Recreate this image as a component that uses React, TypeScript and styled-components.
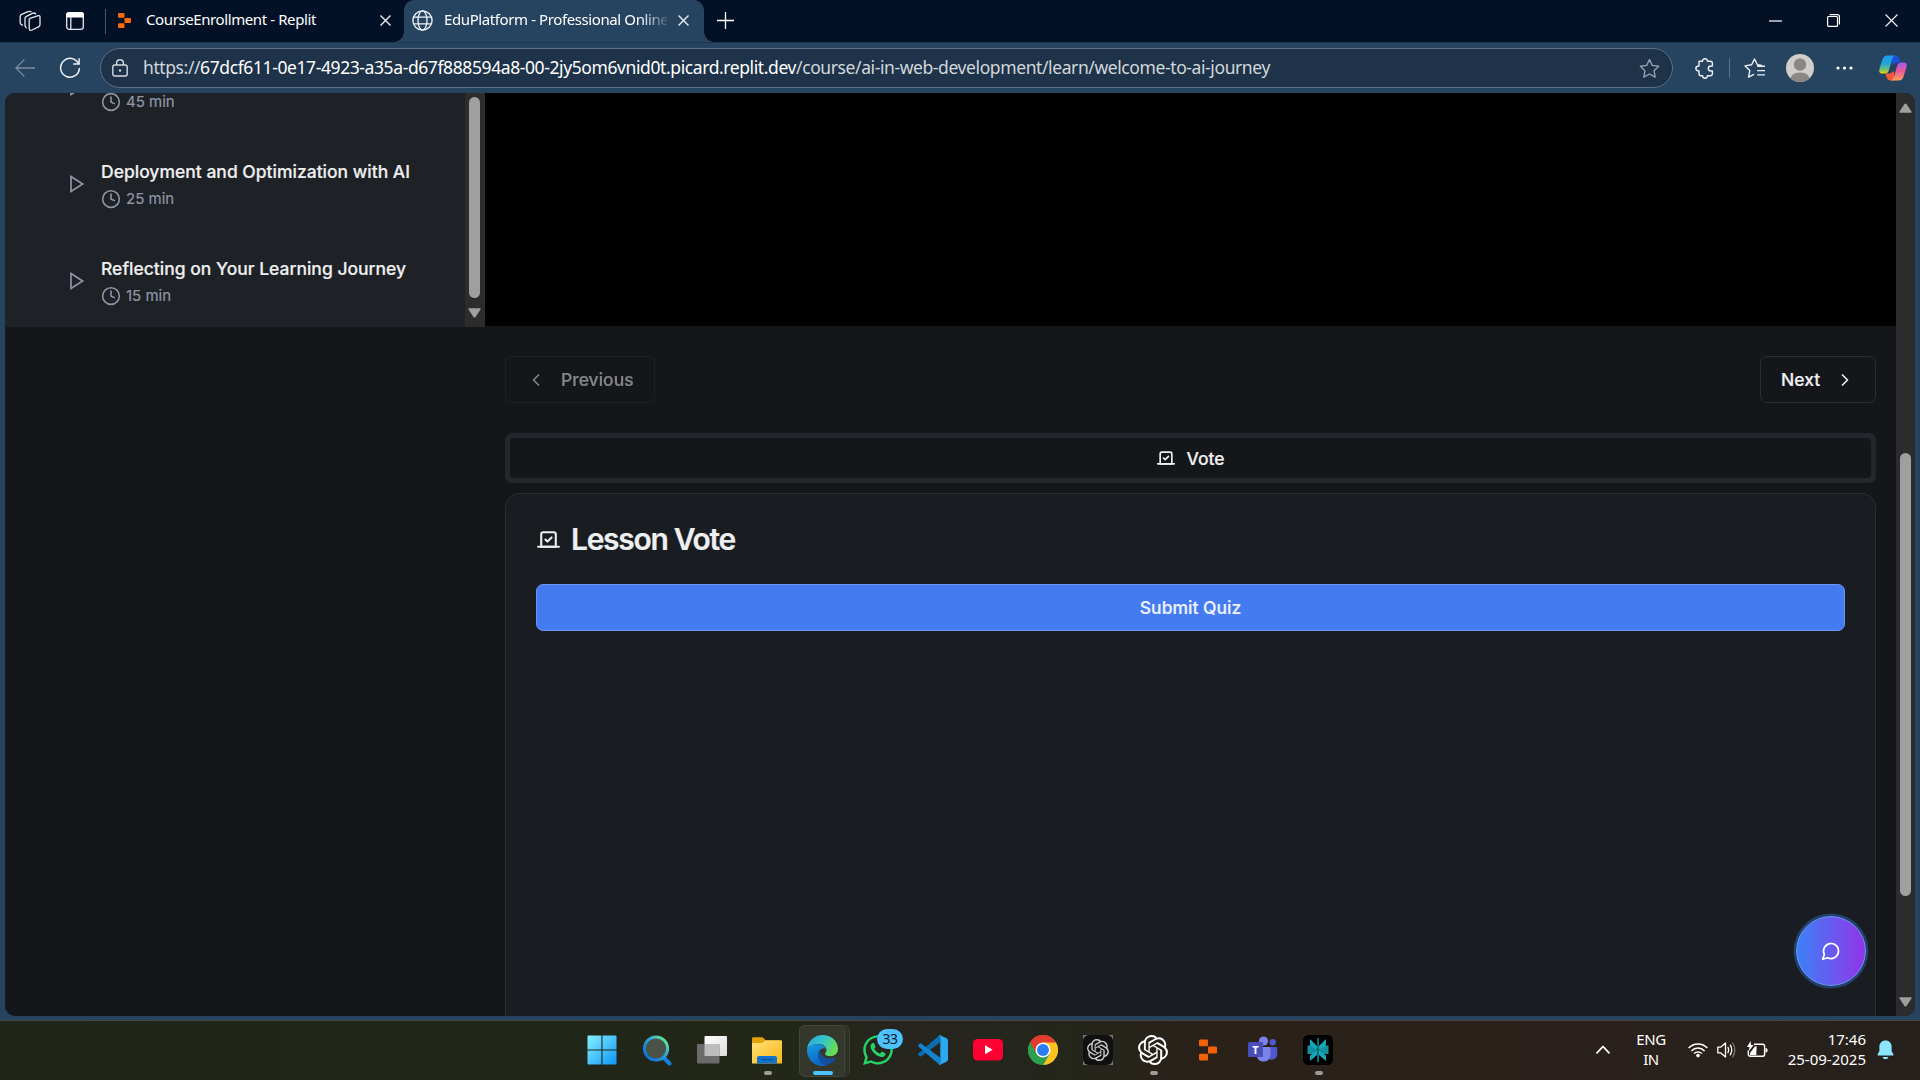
import React from 'react';
import styled, { createGlobalStyle, css } from 'styled-components';
import { ChevronLeft, ChevronRight, Clock, Vote } from 'lucide-react';
import { FaWhatsapp } from 'react-icons/fa';

const GlobalStyle = createGlobalStyle`
  * { box-sizing: border-box; }
  body { margin: 0; background: #15161a; overflow: hidden; }
  button { font: inherit; color: inherit; background: none; border: 0; padding: 0; margin: 0; }
  svg { display: block; flex: none; }
`;

const uiFont = css`font-family: "Noto Sans", "Open Sans", sans-serif;`;
const pageFont = css`font-family: Inter, "Liberation Sans", sans-serif;`;

const Desktop = styled.div`
  width: 1920px;
  height: 1080px;
  display: flex;
  flex-direction: column;
  overflow: hidden;
  background: #264360;
  color: #fff;
  ${uiFont}
`;

const Gap = styled.div<{ $w: number }>`
  width: ${p => p.$w}px;
  flex: none;
`;

/* ---------- browser chrome ---------- */

const TabStrip = styled.header`
  flex: none;
  height: 42px;
  display: flex;
  align-items: stretch;
  background: #031126;
`;

const StripCell = styled.div<{ $w: number }>`
  width: ${p => p.$w}px;
  height: 41px;
  flex: none;
  display: flex;
  align-items: center;
  justify-content: center;
`;

const StripDivider = styled.div`
  width: 1px;
  height: 25px;
  margin: 9px 0 0 14px;
  background: #4b586a;
`;

const BackgroundTab = styled.div`
  width: 298px;
  height: 40px;
  display: flex;
  align-items: center;
  padding-left: 10px;
`;

const ActiveTab = styled.div`
  position: relative;
  width: 300px;
  height: 42px;
  display: flex;
  align-items: center;
  padding: 0 0 2px 8px;
  border-radius: 10px 10px 0 0;
  background: #264360;
  &::before, &::after {
    content: "";
    position: absolute;
    bottom: 0;
    width: 10px;
    height: 10px;
  }
  &::before { left: -10px; background: radial-gradient(circle at 0 0, transparent 9.5px, #264360 10px); }
  &::after { right: -10px; background: radial-gradient(circle at 100% 0, transparent 9.5px, #264360 10px); }
`;

const TabTitle = styled.span<{ $w: number; $fade?: boolean }>`
  width: ${p => p.$w}px;
  flex: none;
  overflow: hidden;
  white-space: nowrap;
  font-size: 15px;
  line-height: 22px;
  padding-bottom: 2px;
  letter-spacing: -0.4px;
  ${p => p.$fade && css`
    mask-image: linear-gradient(90deg, #000 88%, rgba(0, 0, 0, 0.15) 100%);
  `}
`;

const Spacer = styled.div`flex: 1;`;

const Toolbar = styled.div`
  flex: none;
  height: 51px;
  display: flex;
  align-items: center;
  border-top: 1px solid #1c3653;
  background: #264360;
`;

const ToolCell = styled.div<{ $w: number; $shift?: number }>`
  width: ${p => p.$w}px;
  padding-left: ${p => p.$shift || 0}px;
  height: 40px;
  flex: none;
  display: flex;
  align-items: center;
  justify-content: center;
`;

const AddressBar = styled.div`
  width: 1573px;
  height: 40px;
  flex: none;
  display: flex;
  align-items: center;
  border: 1px solid #5c6e80;
  border-radius: 20px;
  background: #1e3349;
`;

const Url = styled.div`
  flex: 1;
  white-space: nowrap;
  font-size: 17.5px;
  line-height: 26px;
  padding-bottom: 2px;
  letter-spacing: -0.4px;
  color: #d2d7dc;
`;

const UrlHost = styled.span`color: #fff;`;

const ToolDivider = styled.div`
  width: 1px;
  height: 20px;
  flex: none;
  background: #5d7389;
`;

const Avatar = styled.div`
  width: 28px;
  height: 28px;
  border-radius: 50%;
  overflow: hidden;
  background: #d0cecb;
`;

/* ---------- page ---------- */

const Viewport = styled.div`
  position: relative;
  flex: none;
  width: 1910px;
  height: 923px;
  margin: 0 5px;
  display: flex;
  overflow: hidden;
  border-radius: 10px;
  background: #15161a;
  -webkit-text-stroke-width: 0.2px;
  ${pageFont}
`;

const Sidebar = styled.aside`
  flex: none;
  width: 480px;
  height: 234px;
  display: flex;
  overflow: hidden;
  background: #1e2125;
  border-right: 1px solid #2b2d33;
`;

const LessonList = styled.div`
  flex: 1;
  display: flex;
  flex-direction: column;
  justify-content: flex-end;
  margin-bottom: -3px;
`;

const LessonRow = styled.div`
  flex: none;
  height: 97px;
  display: flex;
  align-items: center;
  padding-left: 61px;
  gap: 15px;
  color: #8e96a8;
`;

const LessonState = styled.div`padding-bottom: 2px;`;

const LessonText = styled.div`
  display: flex;
  flex-direction: column;
  gap: 5px;
`;

const LessonTitle = styled.div`
  height: 24px;
  font-size: 17.5px;
  font-weight: 500;
  line-height: 24px;
  color: #eeeff1;
  white-space: nowrap;
`;

const LessonMeta = styled.div`
  display: flex;
  align-items: center;
  gap: 5px;
  height: 20px;
  font-size: 15px;
  line-height: 20px;
`;

const Scrollbar = styled.div`
  flex: none;
  width: 19px;
  display: flex;
  flex-direction: column;
  align-items: center;
  background: #2c2c2c;
`;
const MainScroll = styled(Scrollbar)`padding: 10px 0 9px;`;
const SideScroll = styled(Scrollbar)`gap: 10px;`;

const Thumb = styled.div<{ $top: number; $h: number }>`
  width: 11px;
  height: ${p => p.$h}px;
  margin-top: ${p => p.$top}px;
  border-radius: 6px;
  background: #9f9f9f;
`;

const Main = styled.main`
  flex: 1;
  display: flex;
  flex-direction: column;
`;

const Video = styled.div`
  flex: none;
  height: 233px;
  background: #000;
`;

const Lesson = styled.section`
  flex: 1;
  display: flex;
  flex-direction: column;
  padding: 30px 20px 0;
`;

const NavRow = styled.div`
  display: flex;
  justify-content: space-between;
`;

const NavButton = styled.button<{ $w: number; $disabled?: boolean }>`
  width: ${p => p.$w}px;
  height: 47px;
  display: flex;
  align-items: center;
  padding: 0 20px;
  gap: 15px;
  border: 1px solid #2c2d33;
  border-radius: 7px;
  font-size: 17.5px;
  font-weight: 500;
  color: #eeeff1;
  opacity: ${p => (p.$disabled ? 0.5 : 1)};
`;

const Tabs = styled.div`
  height: 50px;
  margin-top: 30px;
  padding: 5px;
  display: flex;
  border-radius: 7px;
  background: #24262d;
`;

const Tab = styled.button`
  flex: 1;
  display: flex;
  align-items: center;
  justify-content: center;
  gap: 10px;
  border-radius: 4px;
  background: #15161a;
  font-size: 17.5px;
  font-weight: 500;
  color: #eeeff1;
`;

const Card = styled.div`
  flex: 1;
  margin-top: 10px;
  padding: 30px;
  border: 1px solid #2c2d33;
  border-bottom: 0;
  border-radius: 15px 15px 0 0;
  background: #191c20;
`;

const CardTitle = styled.h2`
  display: flex;
  align-items: center;
  gap: 10px;
  height: 30px;
  margin: 0;
  font-size: 30px;
  line-height: 32px;
  font-weight: 600;
  letter-spacing: -1.3px;
  color: #eeeff1;
`;

const SubmitButton = styled.button`
  display: block;
  width: 100%;
  height: 47px;
  margin-top: 30px;
  border: 1px solid #6a97f5;
  border-radius: 7px;
  background: #447bf0;
  font-size: 17.5px;
  font-weight: 500;
  color: #eef2fb;
`;

const ChatButton = styled.button`
  position: absolute;
  left: 1791px;
  top: 823px;
  width: 70px;
  height: 70px;
  display: flex;
  align-items: center;
  justify-content: center;
  border-radius: 50%;
  border: 1px solid #6b9cf5;
  background: linear-gradient(90deg, #3b82f6, #9333ea) border-box;
  box-shadow: 0 0 0 2.5px #233f6c;
`;

/* ---------- taskbar ---------- */

const Taskbar = styled.footer`
  flex: none;
  height: 60px;
  margin-top: 4px;
  display: flex;
  align-items: stretch;
  padding-left: 574.5px;
  padding-bottom: 1px;
  border-top: 1px solid #4a4740;
  background: linear-gradient(90deg, #1f2518 0, #202618 560px, #232718 800px, #26251f 900px, #24261c 1050px, #2a2119 1220px, #2a211c 1600px, #25201c 1920px);
`;

const AppSlot = styled.div<{ $active?: boolean }>`
  position: relative;
  width: 55.12px;
  flex: none;
  display: flex;
  align-items: center;
  justify-content: center;
  ${p => p.$active && css`
    &::before {
      content: "";
      position: absolute;
      left: 4px;
      top: 4px;
      width: 49px;
      height: 50px;
      border: 1px solid #3c3f34;
      border-radius: 6px;
      background: #2d3026;
    }
    &::after {
      content: "";
      position: absolute;
      left: 4px;
      top: 4px;
      width: 44px;
      height: 50px;
      border: 1px solid #42453a;
      border-radius: 6px;
      background: #34372c;
    }
  `}
  & > svg { position: relative; z-index: 1; }
`;

const Indicator = styled.i<{ $on?: boolean }>`
  position: absolute;
  z-index: 1;
  left: ${p => (p.$on ? 18 : 24)}px;
  bottom: 4px;
  width: ${p => (p.$on ? 20 : 8)}px;
  height: 4px;
  border-radius: 2px;
  background: ${p => (p.$on ? '#4cc2ff' : '#9b9a97')};
`;

const Badge = styled.span`
  position: absolute;
  z-index: 2;
  left: 27px;
  top: 8px;
  width: 26px;
  height: 20px;
  border-radius: 10px;
  background: #4cc2ff;
  color: #10161c;
  font-size: 14px;
  line-height: 20px;
  letter-spacing: -0.5px;
  text-align: center;
`;

const Tray = styled.div`
  margin-left: auto;
  display: flex;
  align-items: center;
  font-size: 15px;
  line-height: 20px;
  padding-bottom: 1px;
`;

const TrayCell = styled.div<{ $w: number }>`
  width: ${p => p.$w}px;
  display: flex;
  justify-content: center;
`;

const TrayText = styled.div<{ $w: number; $right?: boolean }>`
  width: ${p => p.$w}px;
  padding-bottom: 1px;
  text-align: ${p => (p.$right ? 'right' : 'center')};
  letter-spacing: ${p => (p.$right ? 0 : -0.4)}px;
  white-space: nowrap;
`;

/* ---------- icons ---------- */

const CloseIcon = ({ size = 11, sw = 1.4 }: { size?: number; sw?: number }) => (
  <svg width={size} height={size} viewBox={`0 0 ${size} ${size}`} stroke="#eef1f4" strokeWidth={sw}>
    <path d={`M.5 .5L${size - 0.5} ${size - 0.5}M${size - 0.5} .5L.5 ${size - 0.5}`} />
  </svg>
);

const ReplitIcon = ({ w, h, fill }: { w: number; h: number; fill: string }) => (
  <svg width={w} height={h} viewBox="0 0 18 21" fill={fill}>
    <rect x="0" y="0" width="9" height="6.8" rx="1.2" />
    <rect x="9" y="7" width="9" height="7" rx="1.2" />
    <rect x="0" y="14.2" width="9" height="6.8" rx="1.2" />
  </svg>
);

const OpenAiIcon = ({ size, fill }: { size: number; fill: string }) => (
  <svg width={size} height={size} viewBox="0 0 24 24" fill={fill}>
    <path d="M22.2819 9.8211a5.9847 5.9847 0 0 0-.5157-4.9108 6.0462 6.0462 0 0 0-6.5098-2.9A6.0651 6.0651 0 0 0 4.9807 4.1818a5.9847 5.9847 0 0 0-3.9977 2.9 6.0462 6.0462 0 0 0 .7427 7.0966 5.98 5.98 0 0 0 .511 4.9107 6.051 6.051 0 0 0 6.5146 2.9001A5.9847 5.9847 0 0 0 13.2599 24a6.0557 6.0557 0 0 0 5.7718-4.2058 5.9894 5.9894 0 0 0 3.9977-2.9001 6.0557 6.0557 0 0 0-.7475-7.0729zm-9.022 12.6081a4.4755 4.4755 0 0 1-2.8764-1.0408l.1419-.0804 4.7783-2.7582a.7948.7948 0 0 0 .3927-.6813v-6.7369l2.02 1.1686a.071.071 0 0 1 .038.052v5.5826a4.504 4.504 0 0 1-4.4945 4.4944zm-9.6607-4.1254a4.4708 4.4708 0 0 1-.5346-3.0137l.142.0852 4.783 2.7582a.7712.7712 0 0 0 .7806 0l5.8428-3.3685v2.3324a.0804.0804 0 0 1-.0332.0615L9.74 19.9502a4.4992 4.4992 0 0 1-6.1408-1.6464zM2.3408 7.8956a4.485 4.485 0 0 1 2.3655-1.9728V11.6a.7664.7664 0 0 0 .3879.6765l5.8144 3.3543-2.0201 1.1685a.0757.0757 0 0 1-.071 0l-4.8303-2.7865A4.504 4.504 0 0 1 2.3408 7.872zm16.5963 3.8558L13.1038 8.364 15.1192 7.2a.0757.0757 0 0 1 .071 0l4.8303 2.7913a4.4944 4.4944 0 0 1-.6765 8.1042v-5.6772a.79.79 0 0 0-.407-.667zm2.0107-3.0231l-.142-.0852-4.7735-2.7818a.7759.7759 0 0 0-.7854 0L9.409 9.2297V6.8974a.0662.0662 0 0 1 .0284-.0615l4.8303-2.7866a4.4992 4.4992 0 0 1 6.6802 4.66zM8.3065 12.863l-2.02-1.1638a.0804.0804 0 0 1-.038-.0567V6.0742a4.4992 4.4992 0 0 1 7.3757-3.4537l-.142.0805L8.704 5.459a.7948.7948 0 0 0-.3927.6813zm1.0976-2.3654l2.602-1.4998 2.6069 1.4998v2.9994l-2.5974 1.4997-2.6067-1.4997Z" />
  </svg>
);

const WorkspacesIcon = () => (
  <svg width="22" height="22" viewBox="0 0 22 22" fill="none" stroke="#e4e8ed" strokeWidth="1.3" strokeLinejoin="round" strokeLinecap="round">
    <path d="M11 8.4L19.2 5.6Q21 5.2 21 7V14.6Q21 16.2 19.6 16.8L13 20Q10.4 21 10.2 18.6V10Q10.2 8.8 11 8.4Z" />
    <path d="M7.3 17.8Q6 17 6 15.6V8.4Q6 7 7.4 6.4L14 3.2Q16 2.6 16.6 4" />
    <path d="M3.4 15.2Q1.2 14.2 1.2 12.4V6.6Q1.2 5 2.6 4.4L9 1.6Q11 1 12 1.8" />
  </svg>
);

const TabActionsIcon = () => (
  <svg width="18" height="18" viewBox="0 0 18 18">
    <rect x=".7" y=".7" width="16.6" height="16.6" rx="2.6" fill="none" stroke="#e4e8ed" strokeWidth="1.3" />
    <path d="M0 5.4V3Q0 0 3 0H15Q18 0 18 3V5.4Z" fill="#fff" />
    <path d="M4.8 5V17" stroke="#e4e8ed" strokeWidth="1.3" />
  </svg>
);

const GlobeIcon = () => (
  <svg width="21" height="21" viewBox="0 0 21 21" fill="none" stroke="#f1f4f7" strokeWidth="1.3">
    <circle cx="10.5" cy="10.5" r="9.6" />
    <ellipse cx="10.5" cy="10.5" rx="4.5" ry="9.6" />
    <path d="M1.5 7.2H19.5M1.5 13.8H19.5" />
  </svg>
);

const BackIcon = () => (
  <svg width="20" height="18" viewBox="0 0 20 18" fill="none" stroke="#7c8fa2" strokeWidth="1.3">
    <path d="M20 9H1M9.3 .6L.9 9L9.3 17.4" />
  </svg>
);

const ReloadIcon = () => (
  <svg width="22" height="22" viewBox="0 0 22 22" fill="none" stroke="#eef1f4" strokeWidth="1.5">
    <path d="M19.6 7A9.4 9.4 0 1 0 20.4 11" />
    <path d="M20.1 1.2V7.1H14.2" />
  </svg>
);

const LockIcon = () => (
  <svg width="16" height="18" viewBox="0 0 16 18" fill="none" stroke="#d3d9df" strokeWidth="1.4">
    <rect x=".8" y="6" width="14.4" height="11" rx="2" />
    <path d="M4.6 6V4.2A3.4 3.4 0 0 1 11.4 4.2V6" />
    <circle cx="8" cy="11.5" r="1.2" fill="#d3d9df" stroke="none" />
  </svg>
);

const StarIcon = () => (
  <svg width="21" height="21" viewBox="0 0 24 24" fill="none" stroke="#97a3af" strokeWidth="1.5" strokeLinejoin="round">
    <path d="M12 1.8L15.2 8.4L22.5 9.4L17.2 14.5L18.5 21.8L12 18.3L5.5 21.8L6.8 14.5L1.5 9.4L8.8 8.4Z" />
  </svg>
);

const PuzzleIcon = () => (
  <svg width="19" height="21" viewBox="0 0 19 21" fill="none" stroke="#eef1f4" strokeWidth="1.4" strokeLinejoin="round">
    <path d="M4 3.3H7.6C7.4 -.2 12.6 -.2 12.4 3.3H15.2Q17.4 3.3 17.4 5.4V8H16C12.4 8 12.4 13 16 13H17.4V15.6Q17.4 17.8 15.2 17.8H12.4C12.6 21 7.4 21 7.6 17.8H6Q4 17.8 4 15.6V13C-.2 13 -.2 8 4 8Z" />
  </svg>
);

const FavoritesIcon = () => (
  <svg width="22" height="21" viewBox="0 0 22 21" fill="none" stroke="#eef1f4" strokeWidth="1.4" strokeLinejoin="round">
    <path d="M18 7.4L13.4 6.8L10.5 1L7.6 6.8L1 7.9L5.8 12.5L4.6 19.2L10 16.3M13.2 8.3H21M13.2 12.6H21M13.2 16.9H21" />
  </svg>
);

const CopilotIcon = () => (
  <svg width="28" height="26" viewBox="0 0 28 26">
    <defs>
      <linearGradient id="cpLeft" x1="0" y1="0" x2="0" y2="1">
        <stop offset="0" stopColor="#1a9bf0" /><stop offset=".45" stopColor="#24a6d8" /><stop offset=".75" stopColor="#62c27a" /><stop offset="1" stopColor="#f2d40b" />
      </linearGradient>
      <linearGradient id="cpRight" x1="0" y1="0" x2="0" y2="1">
        <stop offset="0" stopColor="#a25af2" /><stop offset=".5" stopColor="#ee5a93" /><stop offset="1" stopColor="#fda35c" />
      </linearGradient>
    </defs>
    <path d="M13 .5H16.5Q19.6 .5 20.3 3.5L21.5 7.5H17L13 10Z" fill="#1d4fd7" />
    <path d="M15 25.5H11.5Q8.4 25.5 7.7 22.5L6.5 18.5H11L15 16Z" fill="#f25a3c" />
    <path d="M8.5 .5H16Q14 1 13 4.5L9.6 16Q8.7 18.6 6 18.6H3.2Q-.8 18.4 .6 13.5L3.4 4.5Q4.6 .5 8.5 .5Z" fill="url(#cpLeft)" />
    <path d="M19.5 25.5H12Q14 25 15 21.5L18.4 10Q19.3 7.4 22 7.4H24.8Q28.8 7.6 27.4 12.5L24.6 21.5Q23.4 25.5 19.5 25.5Z" fill="url(#cpRight)" />
  </svg>
);

const PlayIcon = () => (
  <svg width="20" height="20" viewBox="0 0 24 24" fill="none" stroke="currentColor" strokeWidth="2">
    <polygon points="6 3 20 12 6 21" />
  </svg>
);

const ScrollArrow = ({ down }: { down?: boolean }) => (
  <svg width="13" height="10" viewBox="0 0 13 10" fill="#9f9f9f" stroke="#9f9f9f" strokeWidth="1.4" strokeLinejoin="round">
    <path d={down ? 'M1 .9H12L7 8.6Q6.5 9.2 6 8.6Z' : 'M1 9.1H12L7 1.4Q6.5 .8 6 1.4Z'} />
  </svg>
);

const WindowsIcon = () => (
  <svg width="30" height="30" viewBox="0 0 30 30">
    <defs><linearGradient id="win" gradientUnits="userSpaceOnUse" x1="0" y1="0" x2="30" y2="30"><stop offset="0" stopColor="#86f3ff" /><stop offset="1" stopColor="#0c93f7" /></linearGradient></defs>
    <path fill="url(#win)" d="M1.5 .5H14.4V14.4H.5V1.5Q.5 .5 1.5 .5ZM15.5 .5H28.5Q29.5 .5 29.5 1.5V14.4H15.5ZM.5 15.5H14.4V29.5H1.5Q.5 29.5 .5 28.5ZM15.5 15.5H29.5V28.5Q29.5 29.5 28.5 29.5H15.5Z" />
  </svg>
);

const SearchIcon = () => (
  <svg width="30" height="31" viewBox="0 0 30 31" fill="none">
    <defs><linearGradient id="sr" x1="0" y1="1" x2="1" y2="0"><stop offset=".2" stopColor="#0f7bd8" /><stop offset=".6" stopColor="#35a7d6" /><stop offset=".9" stopColor="#63e696" /></linearGradient></defs>
    <path d="M20.5 21.5L27.5 28.5" stroke="#1380dd" strokeWidth="4" strokeLinecap="round" />
    <circle cx="14" cy="13.5" r="11.6" fill="#485247" stroke="url(#sr)" strokeWidth="3" />
  </svg>
);

const TaskViewIcon = () => (
  <svg width="30" height="28" viewBox="0 0 30 28">
    <defs><linearGradient id="tv" x1="0" y1="0" x2="1" y2="1"><stop offset="0" stopColor="#fff" /><stop offset="1" stopColor="#dcdcdc" /></linearGradient></defs>
    <rect x="7.5" y="0" width="22.5" height="20" rx="1" fill="url(#tv)" />
    <rect x="0" y="8" width="22.5" height="19.5" rx="1" fill="#6c6a6b" />
    <path d="M7.5 8H21.5Q22.5 8 22.5 9V20H7.5Z" fill="#bdbdbd" />
  </svg>
);

const FolderIcon = () => (
  <svg width="30" height="27" viewBox="0 0 30 27">
    <defs><linearGradient id="fo" x1="0" y1="0" x2="1" y2="1"><stop offset="0" stopColor="#ffe07a" /><stop offset="1" stopColor="#fbb813" /></linearGradient></defs>
    <path d="M0 1.5Q0 .3 1.2 .3H9.5Q11 .3 12 1.5L13.5 3.5H28V10H0Z" fill="#e3a008" />
    <path d="M0 6H10L13.5 3.3H29Q30 3.3 30 4.3V26.5H0Z" fill="url(#fo)" />
    <path d="M5 26.5V21Q5 19 7 19H23Q25 19 25 21V26.5Z" fill="#1173cf" />
    <path d="M9 22.6H21" stroke="#0b4f93" strokeWidth="1.2" />
  </svg>
);

const EdgeIcon = () => (
  <svg width="31" height="31" viewBox="0 0 30 30">
    <defs>
      <linearGradient id="eg1" x1="0" y1="0" x2="1" y2=".4"><stop offset="0" stopColor="#2aa5e0" /><stop offset=".55" stopColor="#32c5c8" /><stop offset="1" stopColor="#66dd53" /></linearGradient>
      <linearGradient id="eg2" x1="0" y1="0" x2=".3" y2="1"><stop offset="0" stopColor="#1a9be0" /><stop offset="1" stopColor="#0c66c4" /></linearGradient>
    </defs>
    <path d="M0 14C.6 6 7 0 15 0C23.5 0 30 6 30 13.4C30 18 26.6 20.6 22.6 20.6C19 20.6 17.4 19.3 17.4 18.2C17.4 17.4 18.8 16.8 18.8 14.6C18.8 11.6 15.5 8.8 10.8 8.8C5.5 8.8 1.5 11.5 0 14Z" fill="url(#eg1)" />
    <path d="M0 14C1.5 11 5 8.9 9.5 8.9C14.5 8.9 18 11.3 18.7 13.8C17 11.8 12.5 12.8 11.2 17C9.5 22.5 14 29 20 29C18.5 29.8 16.5 30 15 30C6.5 30 -.5 23 0 14Z" fill="url(#eg2)" />
    <path d="M12.2 14.5C9 18.5 10.6 26.6 18 29.5C22.5 28.6 26 26 28 22.6C28.3 21.8 27.7 21.5 27 21.9C22 24.2 13.5 22.5 12.2 14.5Z" fill="#124f9c" />
  </svg>
);

const VsCodeIcon = () => (
  <svg width="30" height="30" viewBox="0 0 30 30">
    <path d="M22 7.5L3.3 21.3Q2.5 21.8 1.8 21.2L.4 20Q-.4 19.2 .4 18.4L20.8 .7Q21.6 0 22.5 .4Z" fill="#0a6db1" />
    <path d="M22 22.5L3.3 8.7Q2.5 8.2 1.8 8.8L.4 10Q-.4 10.8 .4 11.6L20.8 29.3Q21.6 30 22.5 29.6Z" fill="#1484cf" />
    <path d="M22 .2L28.6 3.2Q30 4 30 5.4V24.6Q30 26 28.6 26.8L22 29.8Q20.8 30 20.8 29Q22.3 29.4 22.3 27.5V2.5Q22.3 .6 20.8 1Q20.8 0 22 .2Z" fill="#29a9f2" />
  </svg>
);

const YouTubeIcon = () => (
  <svg width="30" height="22" viewBox="0 0 30 22">
    <rect width="30" height="21.5" rx="4.5" fill="#ff0033" />
    <path d="M12 6.3V15.3L19.6 10.8Z" fill="#fff" />
  </svg>
);

const ChromeIcon = () => (
  <svg width="30" height="30" viewBox="0 0 48 48">
    <circle cx="24" cy="24" r="24" fill="#2e9e4e" />
    <path d="M24 24L3.2 12A24 24 0 0 1 44.8 12Z" fill="#e33b2e" />
    <path d="M24 12H44.8A24 24 0 0 1 24 48L34.4 30Z" fill="#fcc31e" />
    <path d="M3.2 12L13.6 30L24 24V12Z" fill="#e33b2e" />
    <path d="M3.2 12A24 24 0 0 0 24 48L34.4 30L24 24L13.6 30Z" fill="#2e9e4e" />
    <circle cx="24" cy="24" r="12" fill="#fff" />
    <circle cx="24" cy="24" r="9.6" fill="#2a7df0" />
  </svg>
);

const GptTile = styled.div`
  width: 30px;
  height: 30px;
  background: #777;
`;
const GptInner = styled.div`
  width: 30px;
  height: 30px;
  display: flex;
  align-items: center;
  justify-content: center;
  border-radius: 6px;
  background: #101010;
`;

const TeamsIcon = () => (
  <svg width="30" height="28" viewBox="0 0 30 28">
    <circle cx="24.7" cy="6.2" r="3.2" fill="#5059c9" />
    <circle cx="15.5" cy="5" r="4.6" fill="#7b83eb" />
    <path d="M19 11H28Q29.2 11 29.2 12.2V18.5A5.5 5.5 0 0 1 19 21Z" fill="#5059c9" />
    <path d="M9 11H21Q22.5 11 22.5 12.5V19.5A7 7 0 0 1 9 21Z" fill="#7b83eb" />
    <rect x="0" y="6" width="15" height="15" rx="1.3" fill="#464eb8" />
    <text x="7.5" y="17.7" fontFamily="Noto Sans, sans-serif" fontSize="11" fontWeight="700" fill="#fff" textAnchor="middle">T</text>
  </svg>
);

const PerplexityIcon = () => (
  <svg width="30" height="30" viewBox="0 0 30 30">
    <rect width="30" height="30" rx="5.5" fill="#000" />
    <g fill="#16a8b8">
      <path d="M7 4L14 11V14L10 14L7 11Z" /><path d="M23 4L16 11V14L20 14L23 11Z" />
      <path d="M4.5 10.5H7L14 14.5V17L9 20.5V19H4.5Z" fill="#12909f" /><path d="M25.5 10.5H23L16 14.5V17L21 20.5V19H25.5Z" fill="#12909f" />
      <path d="M7 20.5L14 15.5V20L7 26Z" /><path d="M23 20.5L16 15.5V20L23 26Z" />
      <rect x="14.4" y="3" width="1.3" height="24" />
    </g>
  </svg>
);

const WifiIcon = () => (
  <svg width="20" height="16" viewBox="0 0 20 16" fill="none" stroke="#fff" strokeWidth="1.5">
    <path d="M.6 6A13 13 0 0 1 19.4 6M3.4 8.9A9.2 9.2 0 0 1 16.6 8.9M6.1 11.5A5.5 5.5 0 0 1 13.9 11.5" />
    <circle cx="10" cy="13.6" r="1.8" fill="#fff" stroke="none" />
  </svg>
);

const VolumeIcon = () => (
  <svg width="20" height="18" viewBox="0 0 20 18" fill="none" stroke="#fff" strokeWidth="1.3" strokeLinejoin="round">
    <path d="M.8 6.2H3.6L8.5 2V16L3.6 11.8H.8Z" />
    <path d="M11 6.4Q12.4 9 11 11.6M13.3 4.2Q16.2 9 13.3 13.8" strokeLinecap="round" />
    <path d="M15.7 2Q20 9 15.7 16" stroke="#777" strokeLinecap="round" />
  </svg>
);

const BatteryIcon = () => (
  <svg width="21" height="17" viewBox="0 0 21 17" fill="none">
    <path d="M7 3.2H15.5Q17.6 3.2 17.6 5.3V13.2Q17.6 15.3 15.5 15.3H3.4Q1.3 15.3 1.3 13.2V9.6" stroke="#fff" strokeWidth="1.4" />
    <path d="M18.5 7H19.4Q20.6 8 20.6 9.3Q20.6 10.6 19.4 11.6H18.5Z" fill="#fff" />
    <path d="M3 14V12L8 5.2H9.6L9.3 14Z" fill="#fff" />
    <path d="M3.6 0L0 6H2.6L1.6 10.6L6.6 4H4Z" fill="#fff" />
  </svg>
);

const BellIcon = () => (
  <svg width="17" height="20" viewBox="0 0 17 20" fill="#8be6ff">
    <path d="M8.5 .5C4.8 .5 2.4 3.2 2.4 6.5V11L.5 14.5Q.3 15.5 1.3 15.5H15.7Q16.7 15.5 16.5 14.5L14.6 11V6.5C14.6 3.2 12.2 .5 8.5 .5Z" />
    <path d="M5.5 17H11.5Q10.8 19.3 8.5 19.3Q6.2 19.3 5.5 17Z" />
  </svg>
);

/* ---------- composition ---------- */

const lessons = [
  { title: '', time: '45 min' },
  { title: 'Deployment and Optimization with AI', time: '25 min' },
  { title: 'Reflecting on Your Learning Journey', time: '15 min' },
];

export default function App() {
  return (
    <Desktop>
      <GlobalStyle />
      <TabStrip>
        <StripCell $w={60}><WorkspacesIcon /></StripCell>
        <StripCell $w={29}><TabActionsIcon /></StripCell>
        <Gap $w={2} />
        <StripDivider />
        <BackgroundTab>
          <StripCell $w={16}><ReplitIcon w={13} h={15} fill="#fb6a0c" /></StripCell>
          <Gap $w={14} />
          <TabTitle $w={232}>CourseEnrollment - Replit</TabTitle>
          <StripCell $w={15}><CloseIcon /></StripCell>
        </BackgroundTab>
        <ActiveTab>
          <GlobeIcon />
          <Gap $w={11} />
          <TabTitle $w={223} $fade>EduPlatform - Professional Online</TabTitle>
          <Gap $w={3} />
          <StripCell $w={27}><CloseIcon /></StripCell>
        </ActiveTab>
        <StripCell $w={43}>
          <svg width="17" height="17" viewBox="0 0 17 17" stroke="#fff" strokeWidth="1.3"><path d="M8.5 0V17M0 8.5H17" /></svg>
        </StripCell>
        <Spacer />
        <StripCell $w={57}>
          <svg width="13" height="2" viewBox="0 0 13 2"><rect width="13" height="1.2" y=".4" fill="#fff" /></svg>
        </StripCell>
        <StripCell $w={58}>
          <svg width="13" height="13" viewBox="0 0 13 13" fill="none" stroke="#fff" strokeWidth="1.2">
            <rect x=".6" y="2.5" width="9.9" height="9.9" rx="1" />
            <path d="M2.6 .6H10.4Q12.4 .6 12.4 2.6V10.4" />
          </svg>
        </StripCell>
        <StripCell $w={58}><CloseIcon size={13} sw={1.2} /></StripCell>
      </TabStrip>

      <Toolbar>
        <ToolCell $w={50}><BackIcon /></ToolCell>
        <ToolCell $w={40}><ReloadIcon /></ToolCell>
        <Gap $w={10} />
        <AddressBar>
          <ToolCell $w={38}><LockIcon /></ToolCell>
          <Gap $w={4} />
          <Url>https://<UrlHost>67dcf611-0e17-4923-a35a-d67f888594a8-00-2jy5om6vnid0t.picard.replit.dev</UrlHost>/course/ai-in-web-development/learn/welcome-to-ai-journey</Url>
          <ToolCell $w={45}><StarIcon /></ToolCell>
        </AddressBar>
        <ToolCell $w={56} $shift={6}><PuzzleIcon /></ToolCell>
        <ToolDivider />
        <ToolCell $w={50}><FavoritesIcon /></ToolCell>
        <ToolCell $w={40}>
          <Avatar>
            <svg width="28" height="28" viewBox="0 0 28 28" fill="#8c8783"><circle cx="14" cy="10.5" r="6.2" /><path d="M3.5 28Q4 18.5 14 18.5T24.5 28Z" /></svg>
          </Avatar>
        </ToolCell>
        <ToolCell $w={49}>
          <svg width="17" height="4" viewBox="0 0 17 4" fill="#fff"><circle cx="2" cy="2" r="1.6" /><circle cx="8.5" cy="2" r="1.6" /><circle cx="15" cy="2" r="1.6" /></svg>
        </ToolCell>
        <ToolCell $w={47}><CopilotIcon /></ToolCell>
      </Toolbar>

      <Viewport>
        <Sidebar>
          <LessonList>
            {lessons.map(l => (
              <LessonRow key={l.time}>
                <LessonState><PlayIcon /></LessonState>
                <LessonText>
                  <LessonTitle>{l.title}</LessonTitle>
                  <LessonMeta><Clock size={20} strokeWidth={1.9} />{l.time}</LessonMeta>
                </LessonText>
              </LessonRow>
            ))}
          </LessonList>
          <SideScroll>
            <Thumb $top={4} $h={201} />
            <ScrollArrow down />
          </SideScroll>
        </Sidebar>
        <Main>
          <Video />
          <Lesson>
            <NavRow>
              <NavButton $w={150} $disabled><ChevronLeft size={20} strokeWidth={2} />Previous</NavButton>
              <NavButton $w={116}>Next<ChevronRight size={20} strokeWidth={2} /></NavButton>
            </NavRow>
            <Tabs><Tab><Vote size={20} />Vote</Tab></Tabs>
            <Card>
              <CardTitle><Vote size={25} />Lesson Vote</CardTitle>
              <SubmitButton>Submit Quiz</SubmitButton>
            </Card>
          </Lesson>
        </Main>
        <MainScroll>
          <ScrollArrow />
          <Thumb $top={340} $h={443} />
          <Spacer />
          <ScrollArrow down />
        </MainScroll>
        <ChatButton>
          <svg width="20" height="20" viewBox="0 0 24 24" fill="none" stroke="#fff" strokeWidth="2" strokeLinecap="round" strokeLinejoin="round"><path d="M7.9 20A9 9 0 1 0 4 16.1L2 22Z" /></svg>
        </ChatButton>
      </Viewport>

      <Taskbar>
        <AppSlot><WindowsIcon /></AppSlot>
        <AppSlot><SearchIcon /></AppSlot>
        <AppSlot><TaskViewIcon /></AppSlot>
        <AppSlot><FolderIcon /><Indicator /></AppSlot>
        <AppSlot $active><EdgeIcon /><Indicator $on /></AppSlot>
        <AppSlot><FaWhatsapp size={34} color="#25d366" /><Badge>33</Badge></AppSlot>
        <AppSlot><VsCodeIcon /></AppSlot>
        <AppSlot><YouTubeIcon /></AppSlot>
        <AppSlot><ChromeIcon /></AppSlot>
        <AppSlot><GptTile><GptInner><OpenAiIcon size={22} fill="#c9c9c9" /></GptInner></GptTile></AppSlot>
        <AppSlot><OpenAiIcon size={30} fill="#fff" /><Indicator /></AppSlot>
        <AppSlot><ReplitIcon w={18} h={22} fill="#f26207" /></AppSlot>
        <AppSlot><TeamsIcon /></AppSlot>
        <AppSlot><PerplexityIcon /><Indicator /></AppSlot>
        <Tray>
          <TrayCell $w={34}>
            <svg width="14" height="9" viewBox="0 0 14 9" fill="none" stroke="#fff" strokeWidth="1.8" strokeLinecap="round" strokeLinejoin="round"><path d="M1 7.8L7 1.5L13 7.8" /></svg>
          </TrayCell>
          <TrayText $w={62}>ENG<br />IN</TrayText>
          <TrayCell $w={31}><WifiIcon /></TrayCell>
          <TrayCell $w={28}><VolumeIcon /></TrayCell>
          <TrayCell $w={32}><BatteryIcon /></TrayCell>
          <TrayText $w={93} $right>17:46<br />25-09-2025</TrayText>
          <TrayCell $w={38}><BellIcon /></TrayCell>
          <Gap $w={16} />
        </Tray>
      </Taskbar>
    </Desktop>
  );
}
